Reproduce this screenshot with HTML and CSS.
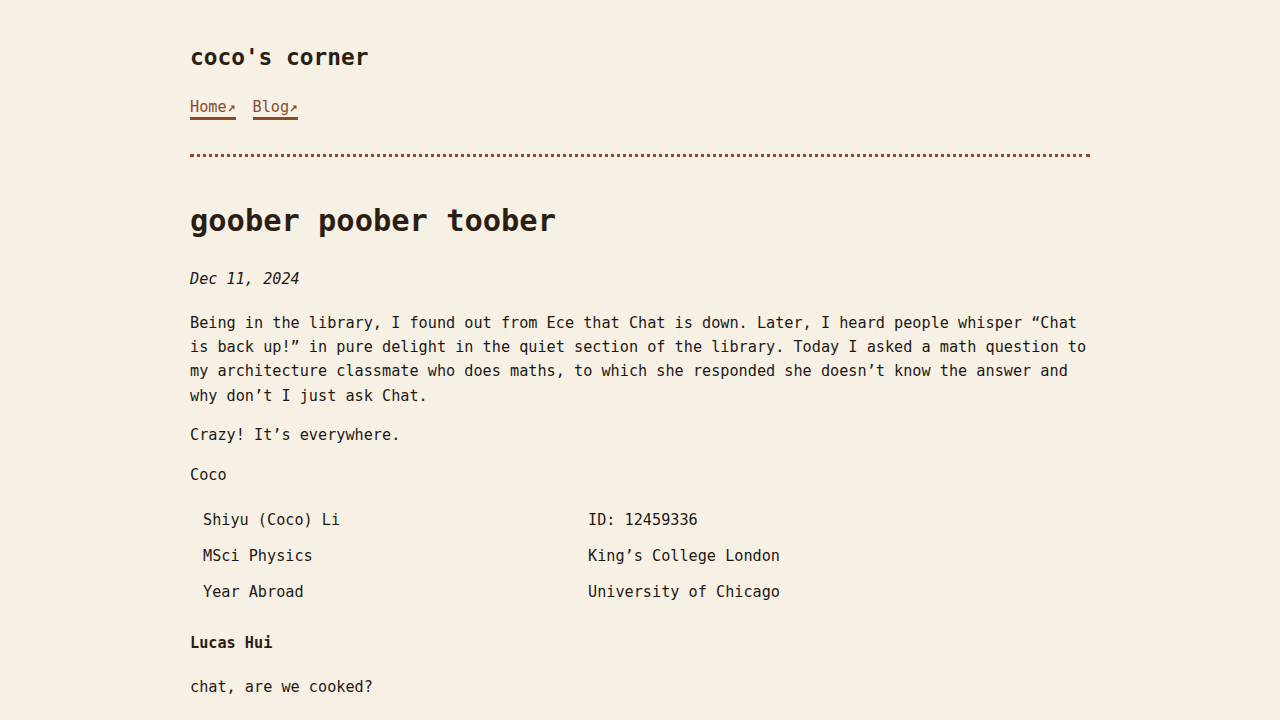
FILE: index.html
```html
<!DOCTYPE html>
<html lang="en">
<head>
<meta charset="utf-8">
<title>goober poober toober - coco's corner</title>
<link rel="stylesheet" href="styles.css">
</head>
<body>
<div class="page">
  <header class="site-header">
    <div class="site-title">coco's corner</div>
    <nav class="site-nav">
      <a class="nav-link" href="#">Home<svg class="ext" viewBox="0 0 9 10" width="9" height="10" aria-hidden="true"><path d="M2 9 L6.2 4.8" stroke="currentColor" stroke-width="1.4" fill="none"/><path d="M3.6 3.6 L7.6 3.4 L7.4 7.4 Z" fill="currentColor"/></svg></a>
      <a class="nav-link" href="#">Blog<svg class="ext" viewBox="0 0 9 10" width="9" height="10" aria-hidden="true"><path d="M2 9 L6.2 4.8" stroke="currentColor" stroke-width="1.4" fill="none"/><path d="M3.6 3.6 L7.6 3.4 L7.4 7.4 Z" fill="currentColor"/></svg></a>
    </nav>
  </header>
  <main class="post">
    <h1 class="post-title">goober poober toober</h1>
    <p class="post-date">Dec 11, 2024</p>
    <p>Being in the library, I found out from Ece that Chat is down. Later, I heard people whisper “Chat is back up!” in pure delight in the quiet section of the library. Today I asked a math question to my architecture classmate who does maths, to which she responded she doesn’t know the answer and why don’t I just ask Chat.</p>
    <p>Crazy! It’s everywhere.</p>
    <p>Coco</p>
    <table class="sig">
      <tr><td class="c1">Shiyu (Coco) Li</td><td>ID: 12459336</td></tr>
      <tr><td class="c1">MSci Physics</td><td>King’s College London</td></tr>
      <tr><td class="c1">Year Abroad</td><td>University of Chicago</td></tr>
    </table>
    <p class="author">Lucas Hui</p>
    <p class="reply">chat, are we cooked?</p>
  </main>
</div>
</body>
</html>
```
FILE: styles.css
```css
html, body {
  margin: 0;
  padding: 0;
  background: #f7f0e5;
}
body {
  font-family: "DejaVu Sans Mono", "Liberation Mono", monospace;
  font-size: 15.2px;
  line-height: 1.6;
  color: #1c1915;
}
.page {
  width: 900px;
  margin: 0 auto;
  padding-top: 44px;
}
.site-header {
  border-bottom: 3px dotted #8a4b28;
  padding-bottom: 34px;
}
.site-title {
  font-size: 22.8px;
  font-weight: bold;
  line-height: 1.2;
  color: #2a1e15;
}
.site-nav {
  margin-top: 27px;
  display: flex;
  gap: 17px;
}
.nav-link {
  color: #8a4b28;
  text-decoration: none;
  border-bottom: 3px solid #8a4b28;
  display: inline-flex;
  align-items: baseline;
  line-height: 19px;
}
.ext {
  width: 9px;
  height: 10px;
}
.post-title {
  font-size: 30.4px;
  line-height: 1.2;
  font-weight: bold;
  color: #2a1e15;
  margin: 46px 0 27px;
}
.post p {
  margin: 0 0 15.2px;
}
.post .post-date {
  font-style: italic;
  margin-bottom: 19.6px;
}
.sig {
  border-collapse: collapse;
  width: 900px;
  margin: 3px 0 0;
}
.sig td {
  padding: 6px 13px;
  line-height: 24px;
  vertical-align: top;
}
.sig .c1 {
  width: 359px;
}
.post .author {
  font-weight: bold;
  color: #2a1e15;
  margin: 20.5px 0 19.7px;
}
```
